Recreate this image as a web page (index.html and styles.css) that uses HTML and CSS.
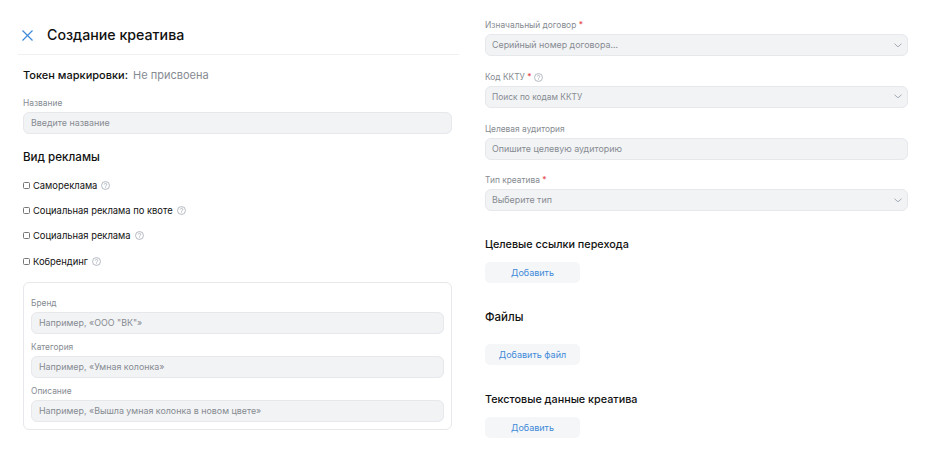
FILE: index.html
```html
<!DOCTYPE html>
<html lang="ru">
<head>
<meta charset="utf-8">
<title>Создание креатива</title>
<link rel="stylesheet" href="styles.css">
</head>
<body>
<main class="page">
  <section class="col-left">
    <header class="head">
      <svg class="close" viewBox="0 0 11 11" width="11" height="11"><path d="M.5.5l10 10M10.5.5l-10 10" fill="none" stroke="#3f8ad8" stroke-width="1.2"/></svg>
      <h1 class="title">Создание креатива</h1>
    </header>
    <div class="left-body">
      <p class="token"><span class="token-key">Токен маркировки:</span><span class="token-val">Не присвоена</span></p>
      <div class="label name-label">Название</div>
      <div class="input">Введите название</div>
      <h2 class="h2 kind">Вид рекламы</h2>
      <div class="checks">
        <label class="check"><input type="checkbox"><span>Самореклама</span><svg class="help" viewBox="0 0 10 10" width="9" height="9"><use href="#q"/></svg></label>
        <label class="check"><input type="checkbox"><span>Социальная реклама по квоте</span><svg class="help" viewBox="0 0 10 10" width="9" height="9"><use href="#q"/></svg></label>
        <label class="check"><input type="checkbox"><span>Социальная реклама</span><svg class="help" viewBox="0 0 10 10" width="9" height="9"><use href="#q"/></svg></label>
        <label class="check"><input type="checkbox"><span>Кобрендинг</span><svg class="help" viewBox="0 0 10 10" width="9" height="9"><use href="#q"/></svg></label>
      </div>
      <div class="box">
        <div class="label">Бренд</div>
        <div class="input boxed">Например, «ООО "ВК"»</div>
        <div class="label">Категория</div>
        <div class="input boxed">Например, «Умная колонка»</div>
        <div class="label">Описание</div>
        <div class="input boxed">Например, «Вышла умная колонка в новом цвете»</div>
      </div>
    </div>
  </section>
  <section class="col-right">
    <div class="field">
      <div class="label">Изначальный договор <b class="req">*</b></div>
      <div class="input select">Серийный номер договора...<svg class="chev" viewBox="0 0 9 5" width="8" height="5"><path d="M.5.5l4 3.5 4-3.5" fill="none" stroke="#99a2ad" stroke-width="1"/></svg></div>
    </div>
    <div class="field">
      <div class="label">Код ККТУ <b class="req">*</b><svg class="help help-label" viewBox="0 0 10 10" width="9" height="9"><use href="#q"/></svg></div>
      <div class="input select small">Поиск по кодам ККТУ<svg class="chev" viewBox="0 0 9 5" width="8" height="5"><path d="M.5.5l4 3.5 4-3.5" fill="none" stroke="#99a2ad" stroke-width="1"/></svg></div>
    </div>
    <div class="field">
      <div class="label">Целевая аудитория</div>
      <div class="input select">Опишите целевую аудиторию</div>
    </div>
    <div class="field">
      <div class="label">Тип креатива <b class="req">*</b></div>
      <div class="input select">Выберите тип<svg class="chev" viewBox="0 0 9 5" width="8" height="5"><path d="M.5.5l4 3.5 4-3.5" fill="none" stroke="#99a2ad" stroke-width="1"/></svg></div>
    </div>
    <h2 class="h2 links">Целевые ссылки перехода</h2>
    <button class="btn" type="button">Добавить</button>
    <h2 class="h2 files">Файлы</h2>
    <button class="btn" type="button">Добавить файл</button>
    <h2 class="h2 texts">Текстовые данные креатива</h2>
    <button class="btn" type="button">Добавить</button>
  </section>
</main>
<svg class="defs" width="0" height="0"><symbol id="q" viewBox="0 0 10 10"><circle cx="5" cy="5" r="4.4" fill="none" stroke="#99a2ad" stroke-width=".8"/><path d="M3.6 4a1.4 1.4 0 1 1 2.2 1.1C5.200 5.500 5 5.700 5 6.300" fill="none" stroke="#99a2ad" stroke-width=".8"/><circle cx="5" cy="7.500" r=".5" fill="#99a2ad"/></symbol></svg>
</body>
</html>
```
FILE: styles.css
```css
* { box-sizing: border-box; }
html, body { margin: 0; padding: 0; background: #fff; }
body { font-family: Inter, "Noto Sans", sans-serif; color: #111; width: 930px; height: 460px; overflow: hidden; }
.defs { position: absolute; }
.page { display: flex; align-items: flex-start; }
.col-left { width: 441px; margin-left: 18px; flex: none; }
.col-right { width: 423px; margin-left: 26px; padding-top: 20px; flex: none; }
.head { height: 55px; border-bottom: 1px solid #eef0f2; display: flex; align-items: center; padding: 16px 0 0 4px; }
.close { flex: none; }
.title { font-size: 14.200px; line-height: 20px; font-weight: 500; margin: 0 0 0 14px; }
.left-body { padding: 0 7px 0 5px; }
.token { margin: 13px 0 0; font-size: 11px; line-height: 15px; font-weight: 500; }
.token-val { margin-left: 5px; color: #868b92; font-weight: 400; }
.label { font-size: 8.400px; line-height: 11px; color: #868b92; height: 11px; display: flex; align-items: center; white-space: pre; }
.name-label { margin-top: 14.500px; }
.input { height: 22px; margin-top: 3.500px; background: #f2f3f5; border: 1px solid #e6e8eb; border-radius: 6px; font-size: 8.900px; line-height: 20px; color: #868b92; padding: 0 7px; display: flex; align-items: center; justify-content: space-between; }
.select { margin-top: 3px; padding-left: 6px; }
.boxed { margin-top: 3px; }
.small { font-size: 8.400px; }
.h2 { font-size: 10.800px; line-height: 15px; font-weight: 500; margin: 0; color: #111; }
.kind { font-size: 11.600px; margin-top: 16px; }
.checks { display: flex; flex-direction: column; gap: 10.200px; margin-top: 13px; }
.check { display: flex; align-items: center; font-size: 9.400px; line-height: 15px; color: #111; height: 15px; }
.check input { appearance: none; width: 7px; height: 7px; margin: 0 3px 0 0; flex: none; background: #fff; border: 1px solid #767676; border-radius: 1.500px; }
.help { margin-left: 4px; flex: none; }
.help-label { margin-left: 3px; }
.box { margin-top: 13.300px; height: 148px; border: 1px solid #e6e8eb; border-radius: 6px; padding: 15px 7px 0; }
.box .label { margin-top: 8px; }
.box .label:first-child { margin-top: 0; }
.req { color: #e64646; font-weight: 400; }
.field { margin-bottom: 15.800px; }
.chev { flex: none; margin-right: -2px; margin-left: auto; }
.links { margin-top: 25.500px; }
.files { font-size: 11.500px; margin-top: 26.800px; }
.texts { margin-top: 26.800px; }
.btn { display: block; width: 95px; height: 21px; margin-top: 10.200px; padding: 0; border: 0; border-radius: 5px; background: #f5f6f8; color: #3f8ad8; font: 400 9px/21px Inter, sans-serif; }
.files + .btn { margin-top: 19px; }
```
